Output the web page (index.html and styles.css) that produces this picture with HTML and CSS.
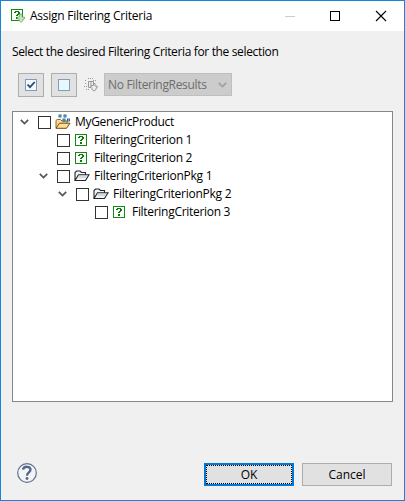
FILE: index.html
```
<!DOCTYPE html>
<html lang="en">
<head>
<meta charset="utf-8">
<title>Assign Filtering Criteria</title>
<link rel="stylesheet" href="styles.css">
</head>
<body>
<svg width="0" height="0" class="defs">
  <symbol id="criterion" viewBox="0 0 12 12"><rect x=".5" y=".5" width="11" height="11" fill="#fff" stroke="#128a12"/><path d="M4 2h4v1h1v2H8v1H7v1H5V6h1V5h1V3H5v1H3V3h1ZM5 8h2v2H5z" fill="#087b08"/></symbol>
  <symbol id="folder" viewBox="0 0 16 12"><path d="M1 10.5V2.5L2.5 1h3.5L7.5 2.5h4v2.2M1 10.5L4.5 4.7H15L11.5 10.5Z" fill="#f3f3f3" stroke="#202830" stroke-width="1.1"/><path d="M4.8 7h8" stroke="#b8bfc4"/></symbol>
  <symbol id="project" viewBox="0 0 16 16"><path d="M1 14V6.5L2.2 5.5h3.3L7 7h5v2" fill="#f9dc9a" stroke="#8f6423"/><path d="M1 14.3L4.5 9.2H15L11.5 14.3Z" fill="#ffdf92" stroke="#6d4918"/><g fill="#c9e8fa" stroke="#145e91" stroke-width=".9"><rect x="4" y="1" width="2" height="2"/><rect x="9" y="1" width="2" height="2"/><rect x="8" y="5" width="2" height="2"/><rect x="12.5" y="5" width="2" height="2"/></g></symbol>
  <symbol id="chevron" viewBox="0 0 9 6"><path d="M.8 .8L4.5 4.5L8.2 .8" fill="none" stroke="currentColor" stroke-width="1.7"/></symbol>
</svg>
<div class="window">
  <header class="titlebar">
    <svg class="app-icon" viewBox="0 0 14 14"><rect x=".5" y=".5" width="11" height="11" fill="#fff" stroke="#128a12"/><path d="M4 2h4v1h1v2H8v1H7v1H5V6h1V5h1V3H5v1H3V3h1ZM5 8h2v2H5z" fill="#087b08"/><path d="M8.5 5h2.5v3h2.5v2H12v1.5L10 13.5L8 11.5V10H6.5V8h2Z" fill="#c3e5b7" stroke="#72ad6b" stroke-width=".8"/></svg>
    <h1><span class="t-title">Assign Filtering Criteria</span></h1>
    <svg class="controls" viewBox="0 0 102 12"><path d="M0 6.5h10" stroke="#ccc"/><rect x="45.5" y="1.5" width="9" height="9" fill="none" stroke="#000"/><path d="M91 1l10 10M101 1L91 11" stroke="#000" stroke-width="1.1"/></svg>
  </header>
  <main>
    <p class="message"><span class="t-message">Select the desired Filtering Criteria for the selection</span></p>
    <div class="toolbar">
      <button class="tool"><svg viewBox="0 0 12 12"><rect x=".5" y=".5" width="11" height="11" fill="#f2faff" stroke="#7f9db9"/><path d="M2.5 5.5L5 8.2L9.7 3" fill="none" stroke="#304878" stroke-width="1.8"/></svg></button>
      <button class="tool"><svg viewBox="0 0 12 12"><rect x=".5" y=".5" width="11" height="11" fill="#e9f7ff" stroke="#7f9db9"/></svg></button>
      <svg class="filter" viewBox="0 0 14 14"><g fill="none" stroke="#999"><path d="M1 2.5h2M4 .5h5M9 2.5h3M1 5.5h2M0 8.5h3M2 11.5h4" stroke-dasharray="1 1"/><path d="M4.5 3.5h5v4H7v2H4.5zM7 4v5M9.5 5.5h1.5v2.5h2v2h-1v1.5l-2 1.5L8 11.5v-2"/></g></svg>
      <div class="select"><span class="t-select">No FilteringResults</span><svg><use href="#chevron"/></svg></div>
    </div>
    <div class="tree">
      <div class="row"><svg class="arrow"><use href="#chevron"/></svg><i class="check"></i><svg class="icon project"><use href="#project"/></svg><span class="t-root">MyGenericProduct</span></div>
      <div class="row level1"><i class="check"></i><svg class="icon criterion"><use href="#criterion"/></svg><span class="t-crit">FilteringCriterion 1</span></div>
      <div class="row level1"><i class="check"></i><svg class="icon criterion"><use href="#criterion"/></svg><span class="t-crit">FilteringCriterion 2</span></div>
      <div class="row level1"><svg class="arrow"><use href="#chevron"/></svg><i class="check"></i><svg class="icon folder"><use href="#folder"/></svg><span class="t-pkg">FilteringCriterionPkg 1</span></div>
      <div class="row level2"><svg class="arrow"><use href="#chevron"/></svg><i class="check"></i><svg class="icon folder"><use href="#folder"/></svg><span class="t-pkg">FilteringCriterionPkg 2</span></div>
      <div class="row level3"><i class="check"></i><svg class="icon criterion"><use href="#criterion"/></svg><span class="t-crit">FilteringCriterion 3</span></div>
    </div>
  </main>
  <footer>
    <svg class="help" viewBox="0 0 20 20"><circle cx="10" cy="10" r="9.3" fill="#f4f4f4" stroke="#5e7190" stroke-width="1.2"/><path d="M6.1 6.6C6.5 2.8 13.5 2.8 13.5 6.8C13.5 9.5 10 9.4 10 12.7" fill="none" stroke="#526789" stroke-width="2.3"/><circle cx="10" cy="15.5" r="1.4" fill="#526789"/></svg>
    <button class="action ok"><span>OK</span></button>
    <button class="action"><span class="t-cancel">Cancel</span></button>
  </footer>
</div>
</body>
</html>
```
FILE: styles.css
```
* { box-sizing: border-box; }
body { margin: 0; font: 12px/18px "Open Sans", "Noto Sans", sans-serif; color: #000; }
svg { display: block; flex: none; }
.defs { position: absolute; }
span { white-space: nowrap; }
.t-title { letter-spacing: -.25px; }
.t-message { letter-spacing: -.35px; }
.t-select { letter-spacing: -.32px; }
.t-root { letter-spacing: -.33px; }
.t-crit { letter-spacing: -.3px; }
.t-pkg { letter-spacing: -.25px; }
.window { width: 405px; height: 501px; border: 1px solid #1883d7; background: #f0f0f0; display: flex; flex-direction: column; }
.titlebar { height: 30px; background: #fff; display: flex; align-items: center; padding: 0 17px 0 10px; }
.app-icon { width: 14px; height: 14px; }
h1 { margin: 0 auto 0 5px; font: inherit; }
.controls { width: 102px; height: 12px; }
main { padding: 12px 11px 0; }
.message { margin: 0; height: 18px; }
.toolbar { display: flex; margin: 12px 0 0 6px; height: 24px; }
button { padding: 0; margin: 0; font: inherit; color: #000; background: #e1e1e1; border: 1px solid #adadad; display: flex; align-items: center; justify-content: center; }
.tool { width: 26px; height: 24px; margin-right: 7px; }
.tool svg { width: 12px; height: 12px; }
.filter { width: 14px; height: 14px; margin: 5px 6px 0 0; }
.select { width: 128px; height: 23px; border: 1px solid #bfbfbf; background: #ccc; color: #6d6d6d; display: flex; align-items: center; justify-content: space-between; padding: 0 4px 0 3px; }
.select svg { width: 9px; height: 6px; color: #a0a0a0; }
.tree { width: 381px; height: 291px; margin-top: 14px; border: 1px solid #828790; background: #fff; padding-top: 1px; }
.row { height: 18px; display: flex; align-items: center; padding-left: 7px; }
.arrow { width: 9px; height: 6px; color: #555; margin-right: 9px; }
.check { width: 13px; height: 13px; border: 1px solid #333; background: #fff; margin-top: 1px; flex: none; }
.icon { margin-right: 4px; }
.project { width: 16px; height: 16px; margin-left: 4px; }
.folder { width: 16px; height: 12px; margin-left: 4px; }
.criterion { width: 12px; height: 12px; margin: 0 7px 0 5px; }
.level1 { padding-left: 44px; }
.level1:has(.arrow) { padding-left: 26px; }
.level2 { padding-left: 45px; }
.level3 { padding-left: 82px; }
footer { display: flex; margin: 61px 12px 0 16px; height: 23px; }
.help { width: 20px; height: 20px; margin-right: auto; }
.action { width: 90px; height: 23px; margin-left: 8px; }
.ok { border: 2px solid #0078d7; outline: 1px dotted #000; outline-offset: -3px; }
```
